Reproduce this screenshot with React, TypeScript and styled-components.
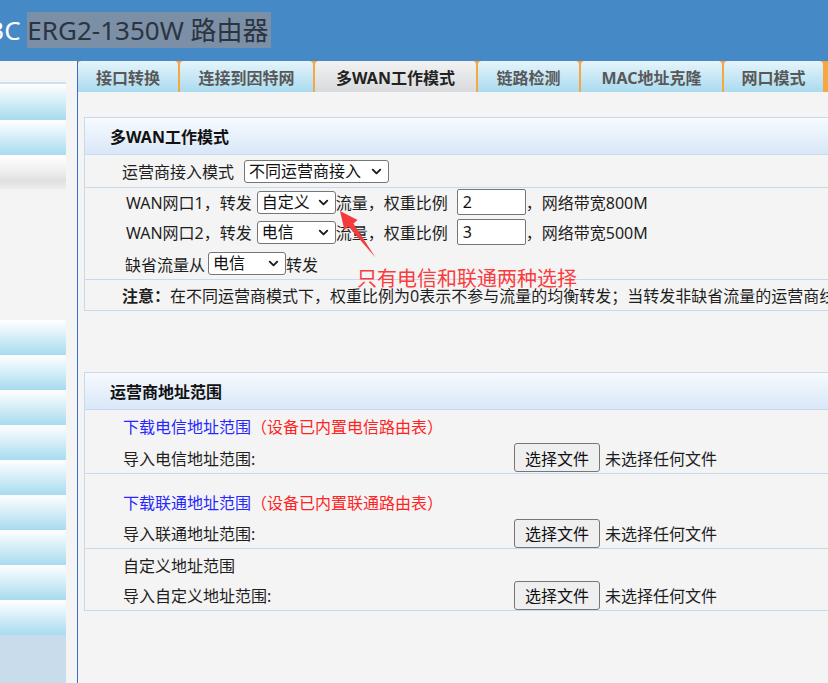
import React from 'react'
import styled, { createGlobalStyle } from 'styled-components'
import { ChevronDown } from 'lucide-react'

const GlobalStyle = createGlobalStyle`
  html, body {
    margin: 0;
    padding: 0;
    overflow: hidden;
    background: #f4f4f4;
  }
  body {
    font-family: "Noto Sans", "Noto Sans CJK SC", sans-serif;
    color: #1e1e1e;
  }
  * {
    box-sizing: border-box;
  }
`

const tabs = [
  { label: '接口转换', w: 100 },
  { label: '连接到因特网', w: 133 },
  { label: '多WAN工作模式', w: 161, active: true },
  { label: '链路检测', w: 101 },
  { label: 'MAC地址克隆', w: 141 },
  { label: '网口模式', w: 99 },
]

const importRows = [
  { carrier: '电信', pt: 0, head: 32, line: 31 },
  { carrier: '联通', pt: 12, head: 32, line: 30 },
]

type Option = { value: string; label: string }

const routeOptions: Option[] = [
  { value: 'custom', label: '自定义' },
  { value: 'ct', label: '电信' },
  { value: 'cu', label: '联通' },
]

function Dropdown({
  w,
  ml,
  value,
  options,
}: {
  w: number
  ml: number
  value: string
  options: Option[]
}) {
  return (
    <SelectWrap $w={w} $ml={ml}>
      <Select defaultValue={value}>
        {options.map(o => (
          <option key={o.value} value={o.value}>
            {o.label}
          </option>
        ))}
      </Select>
      <Caret>
        <ChevronDown size={15} strokeWidth={3} />
      </Caret>
    </SelectWrap>
  )
}

export default function App() {
  return (
    <Page>
      <GlobalStyle />
      <Header>
        <Title>
          H3C <Selected>ERG2-1350W 路由器</Selected>
        </Title>
      </Header>
      <Body>
        <SideColumn>
          <SideMenu>
            <SideGap $h={21} />
            <SideItem $h={38} $top />
            <SideItem $h={35} />
            <SideItem $h={34} $tone="grey" />
            <SideGap $h={131} />
            {Array.from({ length: 9 }).map((_, i) => (
              <SideItem key={i} $h={35} />
            ))}
            <SideFill />
          </SideMenu>
        </SideColumn>

        <Main>
          <TabBar>
            {tabs.map(t => (
              <Tab key={t.label} $w={t.w} $active={t.active}>
                {t.label}
              </Tab>
            ))}
          </TabBar>

          <Content>
            <Panel>
              <PanelHead>多WAN工作模式</PanelHead>
              <Row>
                <Line $h={32}>
                  运营商接入模式
                  <Dropdown
                    w={145}
                    ml={10}
                    value="diff"
                    options={[
                      { value: 'diff', label: '不同运营商接入' },
                      { value: 'same', label: '相同运营商接入' },
                    ]}
                  />
                </Line>
              </Row>
              <Row>
                <Line $h={28} $indent={41}>
                  WAN网口1，转发
                  <Dropdown w={79} ml={5} value="custom" options={routeOptions} />
                  流量，权重比例
                  <WeightInput defaultValue="2" />
                  ，网络带宽800M
                </Line>
                <Line $h={32} $indent={41}>
                  WAN网口2，转发
                  <Dropdown w={79} ml={5} value="ct" options={routeOptions} />
                  流量，权重比例
                  <WeightInput defaultValue="3" />
                  ，网络带宽500M
                </Line>
                <Line $h={31} $indent={40}>
                  缺省流量从
                  <Dropdown w={78} ml={3} value="ct" options={routeOptions.slice(1)} />
                  转发
                </Line>
              </Row>
              <Row>
                <Line $h={30}>
                  <Strong>注意：</Strong>
                  在不同运营商模式下，权重比例为0表示不参与流量的均衡转发；当转发非缺省流量的运营商线路故障时，该流量将从缺省线路转发。
                </Line>
              </Row>
            </Panel>

            <Panel $mt={61}>
              <PanelHead>运营商地址范围</PanelHead>
              {importRows.map(r => (
                <Row key={r.carrier} $pt={r.pt}>
                  <Line $h={r.head} $indent={38}>
                    <Link href="#">下载{r.carrier}地址范围</Link>
                    <Hint>（设备已内置{r.carrier}路由表）</Hint>
                  </Line>
                  <Line $h={r.line} $indent={38}>
                    <FileLabel>导入{r.carrier}地址范围:</FileLabel>
                    <FileButton type="button">选择文件</FileButton>
                    <NoFile>未选择任何文件</NoFile>
                  </Line>
                </Row>
              ))}
              <Row>
                <Line $h={31} $indent={38}>
                  自定义地址范围
                </Line>
                <Line $h={30} $indent={38}>
                  <FileLabel>导入自定义地址范围:</FileLabel>
                  <FileButton type="button">选择文件</FileButton>
                  <NoFile>未选择任何文件</NoFile>
                </Line>
              </Row>
            </Panel>
          </Content>
        </Main>
      </Body>

      <Arrow width="60" height="70" viewBox="0 0 60 70">
        <polygon points="10,11 27.6,20 23.4,23.4 45.5,57.5 18.6,26.8 14.4,30" fill="#f43b3b" />
      </Arrow>
      <Note>只有电信和联通两种选择</Note>
    </Page>
  )
}

const Page = styled.div`
  position: relative;
  width: 828px;
  height: 683px;
  overflow: hidden;
  display: flex;
  flex-direction: column;
`

const Header = styled.header`
  height: 61px;
  flex-shrink: 0;
  background-color: #4589c7;

  display: flex;
  align-items: center;
`

const Title = styled.h1`
  margin: 0 0 0 -30px;
  font-size: 26px;
  font-weight: 400;
  line-height: 33px;
  color: #ffffff;
  white-space: nowrap;
`

const Selected = styled.span`
  background-color: #7b8fa6;
  color: #2c3440;
  padding-right: 2px;
`

const Body = styled.div`
  flex: 1;
  min-height: 0;
  display: flex;
`

const SideColumn = styled.aside`
  width: 77px;
  flex-shrink: 0;
  display: flex;
`

const SideMenu = styled.nav`
  width: 66px;
  display: flex;
  flex-direction: column;
`

const SideGap = styled.div<{ $h: number }>`
  height: ${p => p.$h}px;
  flex-shrink: 0;
`

const SideItem = styled.div<{ $h: number; $tone?: 'blue' | 'grey'; $top?: boolean }>`
  height: ${p => p.$h}px;
  flex-shrink: 0;
  border-top: ${p => (p.$top ? '2px solid #cfe0f0' : 'none')};
  background: ${p =>
    p.$tone === 'grey'
      ? 'linear-gradient(to bottom, #ffffff 0%, #f0f0f0 45%, #e0e0e0 75%, #ededed 100%)'
      : 'linear-gradient(to bottom, #ffffff 0%, #ddf1f9 40%, #a7dbef 100%)'};
`

const SideFill = styled.div`
  flex: 1;
  background-color: #c8dcec;
`

const Main = styled.main`
  flex: 1;
  min-width: 0;
  border-left: 1px solid #3a6fc9;
  overflow: hidden;

  display: flex;
  flex-direction: column;
`

const TabBar = styled.div`
  height: 31px;
  flex-shrink: 0;
  background-color: #f5a742;

  display: flex;
  gap: 2px;
`

const Tab = styled.div<{ $w: number; $active?: boolean }>`
  width: ${p => p.$w}px;
  flex-shrink: 0;
  border-radius: 4px 4px 0 0;
  font-size: 16px;
  font-weight: 700;
  color: ${p => (p.$active ? '#222222' : '#585858')};
  background: ${p =>
    p.$active
      ? 'linear-gradient(to bottom, #f2f2f2, #d8dadd)'
      : 'linear-gradient(to bottom, #e6f4fb, #a9dbef)'};

  display: flex;
  justify-content: center;
  align-items: center;
`

const Content = styled.div`
  flex: 1;
  padding: 25px 0 0 6px;
`

const Panel = styled.section<{ $mt?: number }>`
  width: 900px;
  margin-top: ${p => p.$mt ?? 0}px;
  border: 1px solid #c6daef;
`

const PanelHead = styled.div`
  height: 37px;
  padding-left: 25px;
  border-bottom: 1px solid #c6daef;
  background: linear-gradient(to bottom, #f7fafe, #d9e7f7);
  font-size: 16px;
  font-weight: 700;
  color: #111111;

  display: flex;
  align-items: center;
`

const Row = styled.div<{ $pt?: number }>`
  padding-top: ${p => p.$pt ?? 0}px;
  border-bottom: 1px solid #c6daef;

  &:last-child {
    border-bottom: none;
  }
`

const Line = styled.div<{ $h: number; $indent?: number }>`
  height: ${p => p.$h}px;
  padding-left: ${p => p.$indent ?? 37}px;
  font-size: 16px;
  white-space: nowrap;

  display: flex;
  align-items: center;
`

const SelectWrap = styled.span<{ $w: number; $ml: number }>`
  position: relative;
  width: ${p => p.$w}px;
  height: 23px;
  margin-left: ${p => p.$ml}px;
  flex-shrink: 0;
  display: inline-flex;
`

const Select = styled.select`
  appearance: none;
  width: 100%;
  height: 100%;
  margin: 0;
  padding: 0 18px 0 4px;
  border: 1px solid #767676;
  border-radius: 3px;
  background-color: #ffffff;
  font-family: inherit;
  font-size: 16px;
  line-height: 21px;
  color: #111111;
`

const Caret = styled.span`
  position: absolute;
  right: 5px;
  top: 4px;
  color: #1a1a1a;
  pointer-events: none;
  display: flex;
`

const WeightInput = styled.input`
  width: 69px;
  height: 26px;
  margin-left: 9px;
  padding: 0 5px;
  border: 1px solid #767676;
  border-radius: 2px;
  background-color: #ffffff;
  font-family: inherit;
  font-size: 16px;
  color: #111111;
`

const Strong = styled.b`
  font-weight: 700;
`

const Link = styled.a`
  color: #2727ff;
  text-decoration: none;
`

const Hint = styled.span`
  color: #ff2424;
`

const FileLabel = styled.span`
  width: 391px;
  flex-shrink: 0;
`

const FileButton = styled.button`
  height: 29px;
  padding: 0 10px;
  border: 1px solid #767676;
  border-radius: 3px;
  background-color: #efefef;
  font-family: inherit;
  font-size: 16px;
  color: #111111;
`

const NoFile = styled.span`
  margin-left: 5px;
`

const Arrow = styled.svg`
  position: absolute;
  left: 330px;
  top: 200px;
`

const Note = styled.div`
  position: absolute;
  left: 357px;
  top: 269px;
  font-size: 20px;
  line-height: 20px;
  color: #fa3c3c;
  white-space: nowrap;
`
